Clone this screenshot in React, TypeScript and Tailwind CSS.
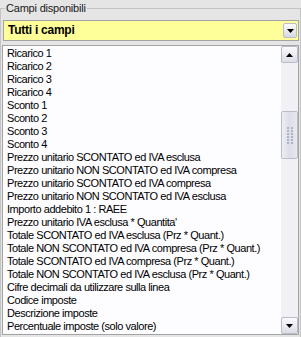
const fields = [
  "Ricarico 1",
  "Ricarico 2",
  "Ricarico 3",
  "Ricarico 4",
  "Sconto 1",
  "Sconto 2",
  "Sconto 3",
  "Sconto 4",
  "Prezzo unitario SCONTATO ed IVA esclusa",
  "Prezzo unitario NON SCONTATO ed IVA compresa",
  "Prezzo unitario SCONTATO ed IVA compresa",
  "Prezzo unitario NON SCONTATO ed IVA esclusa",
  "Importo addebito 1 : RAEE",
  "Prezzo unitario IVA esclusa * Quantita'",
  "Totale SCONTATO ed IVA esclusa (Prz * Quant.)",
  "Totale NON SCONTATO ed IVA compresa (Prz * Quant.)",
  "Totale SCONTATO ed IVA compresa (Prz * Quant.)",
  "Totale NON SCONTATO ed IVA esclusa (Prz * Quant.)",
  "Cifre decimali da utilizzare sulla linea",
  "Codice imposte",
  "Descrizione imposte",
  "Percentuale imposte (solo valore)",
];

// small black triangle used by combo + scroll buttons
function Arrow({ up = false }: { up?: boolean }) {
  return (
    <svg width="7" height="4" viewBox="0 0 7 4" className="block">
      {up ? <polygon points="0,4 7,4 3.5,0" fill="#000" /> : <polygon points="0,0 7,0 3.5,4" fill="#000" />}
    </svg>
  );
}

function ScrollButton({ up = false }: { up?: boolean }) {
  return (
    <div className="h-[17px] w-[17px] rounded-[2px] border border-[#b9bdc9] bg-gradient-to-b from-[#fbfbfd] to-[#dcdde6] flex items-center justify-center">
      <Arrow up={up} />
    </div>
  );
}

export default function App() {
  return (
    <div className="w-[301px] h-[337px] bg-[#e5e5e5] text-black font-['Liberation_Sans',Arial,sans-serif] text-[11px] overflow-hidden">
      {/* group box header */}
      <div className="flex items-start h-[20px]">
        <div className="mt-[8px] w-[5px] h-[12px] border-l border-t border-[#c4c4c4]" />
        <span className="px-[1px] text-[11px] tracking-[-0.2px] leading-[16px] text-[#1a1a1a]">Campi disponibili</span>
        <div className="mt-[8px] flex-1 h-[12px] border-r border-t border-[#c4c4c4]" />
      </div>

      <div className="h-[317px] border-l border-r border-[#c4c4c4] pl-[1px] pr-[1px] flex flex-col">
        {/* combo */}
        <div className="ml-[1px] h-[21px] border border-[#a3a3a3] bg-[#ffff99] flex items-center pl-[4px] pr-[1px]">
          <span className="flex-1 font-bold text-[12px] tracking-[-0.25px] leading-[15px]">Tutti i campi</span>
          <div className="h-[15px] w-[14px] rounded-[2px] border border-[#b9bdc9] bg-gradient-to-b from-[#fbfbfd] to-[#d6d8e2] flex items-center justify-center">
            <Arrow />
          </div>
        </div>

        {/* list */}
        <div className="mt-[4px] h-[290px] border border-[#a3a3a3] bg-[#fdfcff] flex">
          <div className="flex-1 min-w-0 overflow-hidden pl-[4px] pt-[1px] tracking-[-0.45px]">
            {fields.map((f) => (
              <div key={f} className="h-[13px] leading-[13px] whitespace-nowrap">
                {f}
              </div>
            ))}
          </div>
          <div className="w-[17px] bg-[#f1f0f4] flex flex-col">
            <ScrollButton up />
            <div className="flex-1">
              <div className="mt-[48px] h-[48px] w-[17px] rounded-[2px] border border-[#b9bdc9] bg-gradient-to-r from-[#eeeef4] via-[#dcdde8] to-[#e8e8ef] flex items-center justify-center">
                <div className="grid grid-cols-2 gap-x-[2px] gap-y-[1px]">
                  {Array.from({ length: 12 }).map((_, i) => (
                    <div key={i} className="w-[2px] h-[2px] bg-[#b0b3c4]" />
                  ))}
                </div>
              </div>
            </div>
            <ScrollButton />
          </div>
        </div>
      </div>
    </div>
  );
}
